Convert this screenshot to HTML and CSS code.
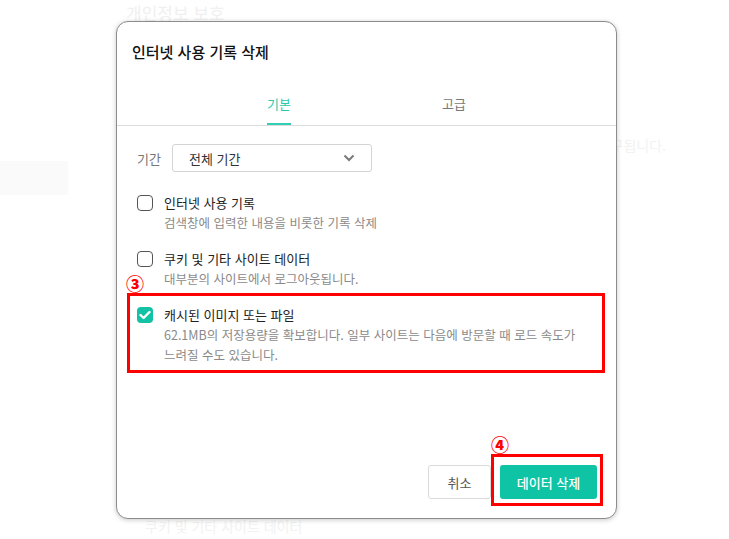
FILE: index.html
```html
<!DOCTYPE html>
<html lang="ko">
<head>
<meta charset="utf-8">
<title>인터넷 사용 기록 삭제</title>
<link rel="stylesheet" href="styles.css">
</head>
<body>
<div class="page">
  <div class="page-title">개인정보 보호</div>
  <div class="page-note">로그인이 다시 요구됩니다.</div>
  <div class="page-block"></div>
  <div class="page-foot">쿠키 및 기타 사이트 데이터</div>
</div>

<div class="dialog">
  <div class="dialog-header">인터넷 사용 기록 삭제</div>
  <div class="tabs">
    <div class="tab-list">
      <div class="tab active"><span>기본</span></div>
      <div class="tab"><span>고급</span></div>
    </div>
  </div>
  <div class="dialog-body">
    <div class="period">
      <span class="period-label">기간</span>
      <div class="select">
        <span>전체 기간</span>
        <svg class="chevron" width="12" height="8" viewBox="0 0 12 8"><path d="M1.5 1.5 L6 6 L10.5 1.5" fill="none" stroke="#7a7a7a" stroke-width="2"/></svg>
      </div>
    </div>
    <div class="check-row">
      <span class="box"></span>
      <div class="check-text">
        <div class="check-label">인터넷 사용 기록</div>
        <div class="check-sub">검색창에 입력한 내용을 비롯한 기록 삭제</div>
      </div>
    </div>
    <div class="check-row">
      <span class="box"></span>
      <div class="check-text">
        <div class="check-label">쿠키 및 기타 사이트 데이터</div>
        <div class="check-sub">대부분의 사이트에서 로그아웃됩니다.</div>
      </div>
    </div>
    <div class="check-row">
      <span class="box checked"><svg width="12" height="10" viewBox="0 0 12 10"><path d="M1.5 5 L4.6 8 L10.5 2" fill="none" stroke="#fff" stroke-width="2.4" stroke-linecap="round" stroke-linejoin="round"/></svg></span>
      <div class="check-text">
        <div class="check-label">캐시된 이미지 또는 파일</div>
        <div class="check-sub">62.1MB의 저장용량을 확보합니다. 일부 사이트는 다음에 방문할 때 로드 속도가<br>느려질 수도 있습니다.</div>
      </div>
    </div>
  </div>
  <div class="dialog-footer">
    <button class="btn btn-cancel">취소</button>
    <button class="btn btn-primary">데이터 삭제</button>
  </div>

  <div class="mark mark-3">③</div>
  <div class="hl hl-3"></div>
  <div class="mark mark-4">④</div>
  <div class="hl hl-4"></div>
</div>
</body>
</html>
```

FILE: styles.css
```css
* { box-sizing: border-box; }
html, body { margin: 0; padding: 0; }
body {
  width: 729px;
  height: 539px;
  overflow: hidden;
  position: relative;
  background: #fff;
  font-family: "Noto Sans CJK KR", "Noto Sans", sans-serif;
  color: #222;
}

/* faint page behind the dialog */
.page { display: flex; flex-direction: column; }
.page-title {
  margin: 2px 0 0 126px;
  font-size: 17px;
  line-height: 22px;
  color: #f0f0f0;
}
.page-note {
  margin-top: 111px;
  width: 666px;
  text-align: right;
  font-size: 14px;
  line-height: 20px;
  color: #f2f2f2;
}
.page-block {
  margin-top: 6px;
  width: 68px;
  height: 34px;
  background: #fafafa;
}
.page-foot {
  margin: 321px 0 0 145px;
  font-size: 14px;
  line-height: 20px;
  color: #f2f2f2;
}

/* dialog */
.dialog {
  position: absolute;
  left: 116px;
  top: 21px;
  width: 501px;
  height: 498px;
  background: #fff;
  border: 1px solid #8c8c8c;
  border-radius: 12px;
  box-shadow: 0 1px 5px rgba(0,0,0,0.22);
  display: flex;
  flex-direction: column;
}
.dialog-header {
  padding: 20px 15px 0;
  font-size: 15px;
  line-height: 20px;
  font-weight: 500;
  color: #111;
}
.tabs {
  margin-top: 32px;
  border-bottom: 1px solid #dcdcdc;
}
.tab-list {
  width: 350px;
  margin: 0 auto;
  display: grid;
  grid-template-columns: 1fr 1fr;
}
.tab {
  display: flex;
  justify-content: center;
  font-size: 13px;
  line-height: 20px;
  color: #7a7a7a;
}
.tab span {
  padding-bottom: 9px;
  border-bottom: 2px solid transparent;
}
.tab.active { color: #2ec7b1; }
.tab.active span { border-bottom-color: #36cdb7; }

.dialog-body { padding: 0 20px; }
.period {
  margin-top: 18px;
  display: flex;
  align-items: center;
}
.period-label {
  width: 35px;
  font-size: 13px;
  color: #777;
}
.select {
  width: 200px;
  height: 28px;
  border: 1px solid #d4d4d4;
  border-radius: 3px;
  display: flex;
  align-items: center;
  justify-content: space-between;
  padding: 0 16px 0 16px;
  font-size: 13px;
  color: #333;
}
.chevron { display: block; }

.check-row {
  display: flex;
  align-items: flex-start;
  margin-top: 21px;
}
.check-row + .check-row { margin-top: 16px; }
.box {
  flex: none;
  width: 16px;
  height: 16px;
  margin-top: 2px;
  border: 1.5px solid #555;
  border-radius: 4px;
  display: flex;
  align-items: center;
  justify-content: center;
}
.box.checked {
  border: none;
  background: #13c2a4;
}
.check-text { margin-left: 11px; }
.check-label {
  font-size: 13px;
  line-height: 20px;
  color: #222;
}
.check-sub {
  font-size: 12.5px;
  line-height: 20px;
  color: #8a8a8a;
}

.dialog-footer {
  margin-top: auto;
  padding: 0 19px 19px;
  display: flex;
  justify-content: flex-end;
  gap: 9px;
}
.btn {
  height: 34px;
  border-radius: 3px;
  font-family: inherit;
  font-size: 13px;
  cursor: pointer;
}
.btn-cancel {
  width: 63px;
  background: #fff;
  border: 1px solid #dadada;
  color: #555;
}
.btn-primary {
  width: 97px;
  background: #0fc3a5;
  border: none;
  color: #fff;
  font-weight: 500;
}

/* annotations */
.hl {
  position: absolute;
  border: 3px solid #f00;
}
.hl-3 { left: 10px; top: 271px; width: 478px; height: 80px; }
.hl-4 { left: 374px; top: 432px; width: 112px; height: 52px; }
.mark {
  position: absolute;
  font-size: 18px;
  line-height: 20px;
  font-weight: 900;
  color: #f00;
}
.mark-3 { left: 9px; top: 251px; }
.mark-4 { left: 374px; top: 412px; }
```
